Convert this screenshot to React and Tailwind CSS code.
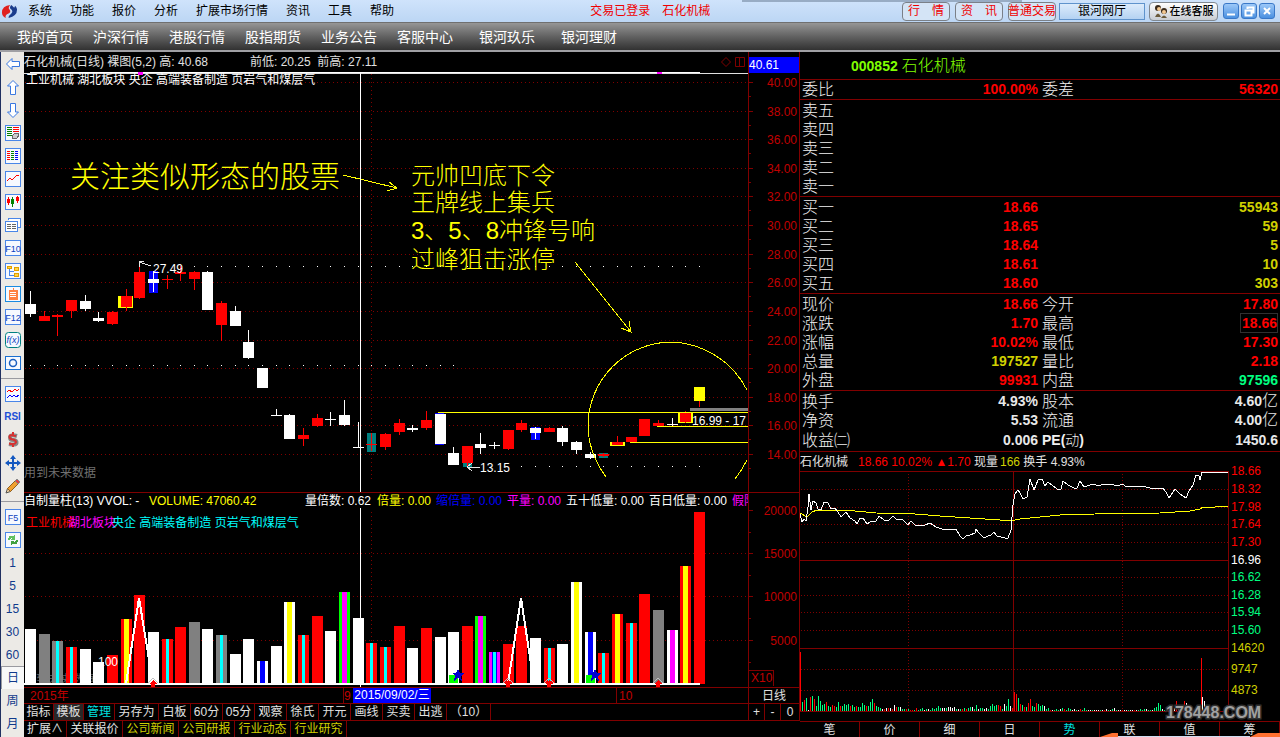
import React, { useState } from 'react';

const RED = '#ff0000';
const WHITE = '#ffffff';
const TEAL = '#008080';
const YELLOW = '#ffff00';
const BLUE = '#0000ff';
const CYAN = '#00ffff';
const GRAY = '#808080';
const GREEN = '#00ff00';
const MAGENTA = '#ff00ff';
const GRID = '#800000';

const menus = ['系统', '功能', '报价', '分析', '扩展市场行情', '资讯', '工具', '帮助'];
const sites = ['我的首页', '沪深行情', '港股行情', '股指期货', '业务公告', '客服中心'];
const partnerSites = ['银河玖乐', '银河理财'];

// [high, open/close top, open/close bottom, low, colour]
const candles = [
  [291, 304, 314, 317, WHITE], [311, 316, 321, 321, RED], [314, 315, 317, 336, RED], [300, 300, 311, 318, RED],
  [295, 301, 309, 311, WHITE], [312, 318, 321, 322, WHITE], [311, 312, 324, 325, RED], [289, 296, 307, 311, RED],
  [264, 272, 298, 299, RED], [271, 279, 283, 292, WHITE], [275, 279, 280, 289, RED], [266, 272, 274, 281, RED],
  [271, 272, 279, 290, RED], [271, 272, 310, 310, WHITE], [301, 303, 325, 341, RED], [306, 311, 326, 326, WHITE],
  [330, 342, 358, 359, WHITE], [368, 368, 388, 388, WHITE], [409, 415, 416, 416, WHITE], [414, 415, 439, 439, WHITE],
  [428, 435, 439, 446, RED], [414, 418, 426, 427, RED], [412, 419, 420, 426, WHITE], [400, 415, 425, 426, WHITE],
  [422, 447, 448, 448, WHITE], [433, 444, 445, 451, RED], [433, 434, 447, 450, RED], [419, 423, 432, 435, RED],
  [425, 428, 430, 432, WHITE], [411, 420, 428, 430, RED], [414, 414, 444, 444, WHITE], [447, 453, 465, 465, WHITE],
  [446, 446, 463, 466, RED], [433, 444, 448, 454, WHITE], [442, 445, 446, 449, WHITE], [430, 430, 449, 450, RED],
  [420, 423, 430, 432, RED], [427, 428, 433, 439, WHITE], [427, 428, 432, 432, RED], [426, 428, 442, 446, WHITE],
  [441, 442, 450, 454, WHITE], [452, 454, 458, 459, WHITE], [453, 454, 456, 457, RED], [436, 442, 445, 445, RED],
  [437, 437, 442, 442, RED], [419, 419, 436, 436, RED], [420, 423, 426, 426, RED], [418, 424, 425, 427, WHITE],
  [411, 413, 422, 423, RED], [387, 387, 401, 401, YELLOW],
];

// [top, colour, stripe colour, stripe width]
const volumes = [
  [629, WHITE], [634, GRAY], [641, GRAY, CYAN, 3], [647, RED, CYAN, 3], [649, WHITE], [662, WHITE], [655, RED],
  [619, RED, YELLOW, 5], [595, RED], [632, WHITE], [639, RED, CYAN, 3], [627, RED], [622, GRAY], [629, WHITE],
  [635, GRAY, CYAN, 3], [654, WHITE], [639, WHITE], [661, WHITE, BLUE, 5], [646, WHITE], [602, WHITE, YELLOW, 5],
  [635, RED, CYAN, 3], [616, RED], [631, WHITE], [592, GREEN, MAGENTA, 5], [618, WHITE], [643, RED, CYAN, 3],
  [647, RED, CYAN, 3], [626, RED], [648, WHITE], [628, RED], [637, WHITE], [632, WHITE], [626, RED],
  [616, GREEN, MAGENTA, 5], [652, MAGENTA, CYAN, 3], [644, RED], [626, RED], [638, WHITE], [648, RED, CYAN, 3],
  [644, WHITE], [582, WHITE, YELLOW, 5], [632, WHITE, BLUE, 5], [653, RED, CYAN, 3], [614, RED, YELLOW, 5],
  [623, RED, CYAN, 3], [594, RED], [610, GRAY], [630, WHITE, MAGENTA, 5], [566, RED, YELLOW, 5], [512, RED],
];

const barX = (i) => 25 + Math.round(i * 13.65);
const priceY = (p) => Math.round(82 + (40 - p) * 14.31);
const prices = [40, 38, 36, 34, 32, 30, 28, 26, 24, 22, 20, 18, 16, 14];
const volumeTicks = [[20000, 511], [15000, 554], [10000, 597], [5000, 641]];

const T = ({ x, y, size = 12, weight = 400, fill = WHITE, anchor = 'start', children }) => (
  <text x={x} y={y} fontSize={size} fontWeight={weight} fill={fill} textAnchor={anchor} dominantBaseline="central">{children}</text>
);

const DotRow = ({ y, from, to }) => (
  <g fill={WHITE}>
    {candles.map((c, i) => (i >= from && i <= to ? <rect key={i} x={barX(i) + 5} y={y} width="1" height="1" /> : null))}
  </g>
);

const PriceChart = () => (
  <svg viewBox="24 72 724 420" className="block h-[420px] w-full" shapeRendering="crispEdges">
    <g stroke={GRID} strokeDasharray="1 3">
      {prices.map((p) => <path key={p} d={`M25 ${priceY(p)}.5H748`} />)}
      <path d="M371.5 74V480" />
    </g>
    <rect x="24" y="73" width="724" height="1" fill="#e0e0e0" />
    <rect x="30" y="72" width="670" height="1" fill={WHITE} />
    <path d="M138 72h5M138 74h5M657 73h5" stroke={MAGENTA} strokeWidth="2" />
    <T x={26} y={80}>工业机械 湖北板块 央企 高端装备制造 页岩气和煤层气</T>

    <DotRow y={266} from={11} to={49} />
    <DotRow y={365} from={0} to={31} />
    <DotRow y={466} from={36} to={49} />

    {/* highlighted sessions */}
    <rect x="118" y="296" width="15" height="12" fill={YELLOW} />
    <rect x="149" y="271" width="9" height="22" fill={BLUE} />
    <rect x="367" y="433" width="9" height="19" fill={TEAL} />
    <rect x="435" y="413" width="9" height="32" fill={BLUE} />
    <rect x="463" y="463" width="9" height="4" fill={TEAL} />
    <rect x="531" y="427" width="9" height="13" fill={BLUE} />
    <rect x="599" y="453" width="9" height="5" fill={TEAL} />
    <rect x="610" y="442" width="15" height="4" fill={YELLOW} />
    <rect x="678" y="412" width="15" height="11" fill={YELLOW} />
    <rect x="699" y="401" width="1" height="6" fill={RED} />

    {candles.map(([high, top, bottom, low, color], i) => (
      <g key={i} fill={color}>
        <rect x={barX(i) + 5} y={high} width="1" height={low - high} />
        <rect x={barX(i)} y={top} width="11" height={Math.max(1, bottom - top)} />
      </g>
    ))}

    <rect x="690" y="408" width="58" height="3" fill={GRAY} />
    <g fill={YELLOW}>
      <rect x="438" y="412" width="310" height="1" />
      <rect x="657" y="426" width="91" height="1" />
      <rect x="630" y="442" width="118" height="1" />
    </g>
    <g fill="none" stroke={YELLOW}>
      <path d="M606 477Q588 452 588 425A84 84 0 0 1 672 342A88 88 0 0 1 747 390M747 460Q742 470 735 479" />
      <path d="M343 175L397 188M389 182L397 188L387 191" />
      <path d="M575 262L631 332M621 328L631 332L629 321" />
    </g>
    <g fill="none" stroke="#e8e8e8">
      <path d="M151 266L139 262M139 267V261H144M480 467H467M472 463L467 467L472 471" />
    </g>
    <T x={153} y={269}>27.49</T>
    <T x={480} y={468}>13.15</T>
    <T x={692} y={421}>16.99 - 17</T>

    <T x={70} y={176} size={30} weight={300} fill={YELLOW}>关注类似形态的股票</T>
    <T x={411} y={175} size={24} weight={300} fill={YELLOW}>元帅凹底下令</T>
    <T x={411} y={202} size={24} weight={300} fill={YELLOW}>王牌线上集兵</T>
    <T x={411} y={230} size={24} weight={300} fill={YELLOW}>3、5、8冲锋号响</T>
    <T x={411} y={259} size={24} weight={300} fill={YELLOW}>过峰狙击涨停</T>
    <T x={24} y={473} fill="#707070">用到未来数据</T>
    <rect x="360" y="72" width="1" height="420" fill={WHITE} />
  </svg>
);

const PriceAxis = () => (
  <svg viewBox="749 52 50 440" className="block h-[440px] w-full" shapeRendering="crispEdges">
    <rect x="749" y="57" width="50" height="16" fill={BLUE} />
    <T x={749} y={65}>40.61</T>
    {prices.map((p) => (
      <g key={p}>
        <rect x="749" y={priceY(p)} width="4" height="1" fill={GRID} />
        <rect x="749" y={priceY(p) + 14} width="2" height="1" fill={GRID} />
        <T x={797} y={priceY(p) + 1} fill="#c00000" anchor="end">{p.toFixed(2)}</T>
      </g>
    ))}
  </svg>
);

const STAR = 'M0-6L2-2H6L3 1L4 6L0 3L-4 6L-3 1L-6-2H-2Z';

const VolumeChart = () => (
  <svg viewBox="24 508 724 179" className="block h-[179px] w-full" shapeRendering="crispEdges">
    <g stroke={GRID} strokeDasharray="1 3">
      {volumeTicks.slice(1).map(([v, y]) => <path key={v} d={`M25 ${y - 1}.5H748`} />)}
      <path d="M371.5 512V684" />
    </g>
    <T x={24} y={680} fill="#606060">用到未来数据</T>
    {volumes.map(([top, color, stripe, w], i) => (
      <g key={i}>
        <rect x={barX(i)} y={top} width="11" height={684 - top} fill={color} />
        {color === MAGENTA && <rect x={barX(i) + 3} y={top} width="5" height={684 - top} fill={BLUE} />}
        {stripe && <rect x={barX(i) + (11 - w) / 2} y={top} width={w} height={684 - top} fill={stripe} />}
      </g>
    ))}
    <rect x="449" y="675" width="9" height="8" fill={GREEN} />
    <rect x="586" y="675" width="9" height="8" fill={GREEN} />
    <path d={STAR} transform="translate(458 675)" fill="#0000d0" />
    <path d={STAR} transform="translate(595 675)" fill="#0000d0" />
    <rect x="24" y="683" width="676" height="2" fill={WHITE} />
    <path d="M126 684L139 598L153 684M508 684L521 598L534 684" fill="none" stroke={WHITE} strokeWidth="2" />
    {[153, 508, 549, 658].map((x) => (
      <g key={x}>
        <path d={`M${x - 5} 683L${x} 678L${x + 5} 683`} fill="none" stroke="#c0c0c0" />
        <path d={`M${x} 680L${x + 4} 684H${x + 2}V687H${x - 2}V684H${x - 4}Z`} fill={RED} />
      </g>
    ))}
    <T x={98} y={662}>100</T>
    <T x={26} y={523} fill={RED}>工业机械</T>
    <T x={68} y={523} fill={MAGENTA}>湖北板块</T>
    <T x={112} y={523} fill={CYAN}>央企 高端装备制造 页岩气和煤层气</T>
    <rect x="360" y="508" width="1" height="179" fill={WHITE} />
  </svg>
);

const VolumeAxis = () => (
  <svg viewBox="749 493 50 194" className="block h-[194px] w-full" shapeRendering="crispEdges">
    {volumeTicks.map(([v, y]) => (
      <g key={v}>
        <rect x="749" y={y - 1} width="4" height="1" fill={GRID} />
        <rect x="749" y={y + 21} width="2" height="1" fill={GRID} />
        <T x={797} y={y} fill="#c00000" anchor="end">{v}</T>
      </g>
    ))}
    <path d="M749 670.5H773.5V685.5" fill="none" stroke={GRID} />
    <T x={751} y={678} fill="#c00000">X10</T>
  </svg>
);

/* ---------- left tool strip ---------- */

const Box = ({ stroke = '#4a86e8', children }) => (
  <svg viewBox="0 0 16 16" className="size-4" shapeRendering="crispEdges">
    <rect x="0.5" y="0.5" width="15" height="15" fill="#f6f9ff" stroke={stroke} />
    {children}
  </svg>
);

const Rows = ({ x, color, ys, w = 3 }) => ys.map((y) => <rect key={y} x={x} y={y} width={w} height="1" fill={color} />);

const BoxText = ({ children }) => (
  <Box>
    <text x="8" y="12" fontSize="9" fill="#0a3fc0" textAnchor="middle">{children}</text>
  </Box>
);

const Arrow = ({ d }) => (
  <svg viewBox="0 0 16 16" className="size-4"><path d={d} fill="#fff" stroke="#3a78e0" /></svg>
);

const tools = [
  ['后退', <Arrow d="M1.5 8L7 2.5V5.5H14.5V10.5H7V13.5Z" />],
  ['上翻', <Arrow d="M8 1.5L13.5 7H10.5V15.5H5.5V7H2.5Z" />],
  ['下翻', <Arrow d="M8 15.5L2.5 10H5.5V1.5H10.5V10H13.5Z" />],
  ['报价', (
    <Box>
      <Rows x={2} w={5} color="#008000" ys={[2, 4, 6, 8, 10]} />
      <Rows x={8} w={6} color={RED} ys={[2, 4, 6]} />
      <path d="M7 11l2-2 4-1 1 2-2 3-4 1z" fill="#ccc" stroke="#666" />
    </Box>
  )],
  ['列表', (
    <Box>
      <Rows x={2} color={RED} ys={[3, 5, 7, 9, 11]} />
      <Rows x={6} color="#008000" ys={[3, 5, 7, 9, 11]} />
      <Rows x={10} color={BLUE} ys={[3, 5, 7, 9, 11]} />
    </Box>
  )],
  ['分时', <Box><path d="M2 10L5 7L7 9L11 5L14 4" stroke={RED} fill="none" /></Box>],
  ['K线', (
    <Box>
      <path d="M3.5 3V11M12.5 2V9" stroke={RED} />
      <path d="M7.5 3V13" stroke="#008000" />
      <rect x="2" y="5" width="3" height="4" fill={RED} />
      <rect x="6" y="5" width="3" height="5" fill="#008000" />
      <rect x="11" y="3" width="3" height="4" fill={RED} />
    </Box>
  )],
  ['窗口', (
    <svg viewBox="0 0 16 16" className="size-4" shapeRendering="crispEdges">
      <path d="M3.5 3V1.5H15.5V10.5H13" fill="#fff" stroke="#4a86e8" />
      <rect x="0.5" y="4.5" width="12" height="10" fill="#fff" stroke="#4a86e8" />
      <path d="M2 7.5H6M7 7.5H11M2 9.5H6M7 9.5H11M2 11.5H6M7 11.5H11" stroke="#666" />
    </svg>
  )],
  ['F10', <BoxText>F10</BoxText>],
  ['板块', (
    <Box>
      <path d="M4.5 6V12.5H9M4.5 8.5H9" stroke="#4a86e8" fill="none" />
      <path d="M2.500 3.500H6.500V5.500H2.500ZM9.500 4.500H13.500V7.500H9.500ZM9.500 10.500H13.500V13.500H9.500Z" fill="#ffd54a" stroke="#e0a000" />
    </Box>
  )],
  ['自选', (
    <Box stroke="#1a8ae0">
      <path d="M8 2V4M4 4H12V13H4Z" fill="#ff8040" stroke="#ff8040" />
      <path d="M5 6.500H11M5 8.500H11M5 10.500H11" stroke="#fff" />
    </Box>
  )],
  ['F12', <BoxText>F12</BoxText>],
  ['公式', (
    <svg viewBox="0 0 16 16" className="size-4">
      <rect x="0.5" y="0.5" width="15" height="15" rx="3" fill="#f6f9ff" stroke="#008080" />
      <text x="8" y="11" fontSize="9" fontStyle="italic" fill="#0a3fc0" textAnchor="middle">f(x)</text>
    </svg>
  )],
  ['圆', <svg viewBox="0 0 16 16" className="size-4"><rect x="0.5" y="1.5" width="15" height="13" fill="#f6f9ff" stroke="#1a6fd0" /><circle cx="8" cy="8" r="3.500" fill="none" stroke="#1a5fc0" strokeWidth="1.500" /></svg>],
];

const drawTools = [
  ['叠加', (
    <Box>
      <path d="M2 6L4 4L7 6L10 3L12 5L14 3" stroke={RED} fill="none" />
      <path d="M2 12L5 9L7 11L9 9L11 11L14 9" stroke={BLUE} fill="none" />
    </Box>
  )],
  ['RSI', <span className="text-[10px] font-bold text-[#2050d8]">RSI</span>],
  ['交易', (
    <svg viewBox="0 0 16 16" className="size-4">
      <path d="M12 4Q5 2 5 5.500Q5 8 8 8Q12 8 11.500 11Q11 13.500 4 12" fill="none" stroke="#888" strokeWidth="4" />
      <path d="M11 4Q4 2 4.500 5Q5 7.500 8 7.500Q11 8 11 10.500Q10 13 4 11.500M8 0V3M8 12V15" fill="none" stroke="#d83030" strokeWidth="2" />
    </svg>
  )],
  ['移动', (
    <svg viewBox="0 0 16 16" className="size-4">
      <path d="M8 0L11 4H9V7H12V5L16 8L12 11V9H9V12H11L8 16L5 12H7V9H4V11L0 8L4 5V7H7V4H5Z" fill="#1458c0" />
    </svg>
  )],
  ['画笔', (
    <svg viewBox="0 0 16 16" className="size-4">
      <path d="M1 15L2.500 10.500L5.500 13.500Z" fill="#f0d0a0" stroke="#555" />
      <path d="M2.500 10.500L10 3L13 6L5.500 13.500Z" fill="#f0a030" stroke="#906020" />
      <path d="M10 3L12 1L15 4L13 6Z" fill="#e04040" stroke="#888" />
    </svg>
  )],
];

const periodTools = [
  ['F5', <BoxText>F5</BoxText>],
  ['刷新', (
    <Box>
      <path d="M3 8Q3 3 8 4L10 3V8H6L7 6Q5 6 5 8Z" fill="#60c060" />
      <path d="M13 8Q13 13 8 12L6 13V8.500H10L9 10Q11 10 11 8Z" fill="#40a040" />
    </Box>
  )],
  ...['1', '5', '15', '30', '60'].map((n) => [n, <span className="text-[#103a8c]">{n}</span>]),
];

const ToolGroup = ({ items }) => items.map(([label, icon]) => (
  <button key={label} aria-label={label} className="flex h-[23px] w-full items-center justify-center">{icon}</button>
));

const Divider = () => <div className="flex h-2 w-full items-center"><div className="h-px w-full bg-[#9a9aa0]" /></div>;

const ToolStrip = () => {
  const [period, setPeriod] = useState('日');
  return (
    <aside className="flex w-6 shrink-0 flex-col border-l border-[#203060] bg-[#eceae6]">
      <ToolGroup items={tools} />
      <Divider />
      <ToolGroup items={drawTools} />
      <Divider />
      <ToolGroup items={periodTools} />
      {['日', '周', '月'].map((p) => (
        <button
          key={p}
          onClick={() => setPeriod(p)}
          className={`h-[23px] w-full text-[#103a8c] ${p === period ? 'border-t border-l border-[#9a9aa0] bg-[#f8f8f8]' : ''}`}
        >
          {p}
        </button>
      ))}
    </aside>
  );
};

/* ---------- window chrome ---------- */

const PillButton = ({ className, children }) => (
  <button className={`h-[19px] shrink-0 rounded-[4px] border border-[#7a8088] bg-[#d4e4f6] text-[#f00000] ${className}`}>{children}</button>
);

const windowIcons = [
  ['最小化', 'M4 11.500H12'],
  ['还原', 'M6.500 6V4.500H12.500V9.500H11M4.500 7.500H10.500V12.500H4.500Z'],
  ['关闭', 'M5 5L11 11M11 5L5 11'],
];

const TopBar = () => (
  <header className="relative flex h-[22px] items-center bg-linear-to-b from-[#cfe3fb] to-[#bcd6f4] text-black">
    <div className="absolute top-0 left-[58%] h-0.5 w-[280px] bg-[#98acc4]" />
    <svg viewBox="0 0 18 18" className="mr-2.5 ml-px size-[17px]">
      <path d="M10 2Q1 3 1 10Q1 14 5 16Q4 12 8 11Q11 10 9 7Q7 5 10 2Z" fill="#e02020" />
      <path d="M11 2Q8 5 11 7Q13 9 11 11Q8 13 8 16Q17 14 17 7Q17 5 15 3L14 5Z" fill="#1a3c8c" />
    </svg>
    <nav className="flex gap-[18px]">
      {menus.map((m) => <button key={m}>{m}</button>)}
    </nav>
    <div className="ml-[196px] flex gap-3 whitespace-nowrap text-[#f00000]">
      <span>交易已登录</span>
      <span>石化机械</span>
    </div>
    <div className="ml-auto flex items-center gap-[5px] pr-[5px] whitespace-nowrap">
      <PillButton className="w-12">行&emsp;情</PillButton>
      <PillButton className="w-12">资&emsp;讯</PillButton>
      <PillButton className="w-12 px-0">
        <span className="-mx-px">普通交易</span>
      </PillButton>
      <button className="-ml-0.5 h-[17px] w-[86px] border border-[#5f93cc] bg-linear-to-b from-[#dcebfb] to-[#b4d2f2] leading-none">银河网厅</button>
      <button className="-ml-px flex h-[19px] w-[69px] items-center justify-center gap-0.5 rounded-[4px] border border-[#808890] bg-linear-to-b from-white to-[#c8ccd2] text-[11px] font-medium">
        <svg viewBox="0 0 14 14" className="size-[14px]">
          <circle cx="4" cy="4" r="3" fill="#3a2a1a" />
          <circle cx="10" cy="7" r="3" fill="#3a2a1a" />
          <circle cx="5" cy="5" r="2" fill="#f4c890" />
          <circle cx="10" cy="8" r="2" fill="#f4c890" />
          <path d="M1 13Q4 6 7 13ZM7 14Q10 9 13 14Z" fill="#6a5a3a" />
        </svg>
        在线客服
      </button>
      <div className="flex gap-0.5">
        {windowIcons.map(([label, d]) => (
          <button key={label} aria-label={label} className="size-4 rounded-[3px] border border-[#3a78c8] bg-linear-to-b from-[#9cc8f8] to-[#4a90e0]">
            <svg viewBox="0 0 16 16" className="-m-px size-4"><path d={d} fill="none" stroke="#fff" strokeWidth="2" /></svg>
          </button>
        ))}
      </div>
    </div>
  </header>
);

const SiteBar = () => (
  <nav className="flex h-[30px] items-center gap-5 border-t border-b-2 border-t-[#707070] border-b-[#a0a0a4] bg-linear-to-b from-[#969696] to-[#323232] pl-[17px] text-sm text-white">
    {sites.map((s) => <a key={s} href="#">{s}</a>)}
    {partnerSites.map((s) => <a key={s} href="#" className="ml-1.5">{s}</a>)}
  </nav>
);

/* ---------- chart pane ---------- */

const Cell = ({ className = '', children }) => (
  <button className={`h-full shrink-0 border-r border-[#800000] whitespace-nowrap ${className}`}>{children}</button>
);

const templates = ['白板', '60分', '05分', '观察', '徐氏', '开元', '画线', '买卖', '出逃'];
const infoLinks = ['公司新闻', '公司研报', '行业动态', '行业研究'];

const ChartPane = () => (
  <section className="flex min-w-0 flex-1 flex-col leading-4">
    <div className="flex">
      <div className="min-w-0 flex-1">
        <div className="flex h-5 items-center whitespace-pre text-[#e0e0e0]">
          <span className="w-[226px]">石化机械(日线) 裸图(5,2) 高: 40.68</span>
          <span>前低: 20.25  前高: 27.11</span>
          <svg viewBox="0 0 26 12" className="mr-0.5 ml-auto h-3 w-[26px]">
            <path d="M6 1.500L10.500 6L6 10.500L1.500 6ZM15.500 1.500H24.500V10.500H15.500ZM19.500 1.500V10.500" fill="none" stroke={GRID} />
          </svg>
        </div>
        <PriceChart />
        <div className="flex h-4 items-center overflow-hidden border-t border-[#800000] whitespace-nowrap text-white">
          <span className="w-[125px] shrink-0">自制量柱(13) VVOL: -</span>
          <span className="w-[156px] shrink-0 text-[#ffff00]">VOLUME: 47060.42</span>
          <span className="w-[72px] shrink-0">量倍数: 0.62</span>
          <span className="w-[59px] shrink-0 text-[#ffff00]">倍量: 0.00</span>
          <span className="w-[71px] shrink-0 text-[#0000ff]">缩倍量: 0.00</span>
          <span className="w-[59px] shrink-0 text-[#ff00ff]">平量: 0.00</span>
          <span className="w-[83px] shrink-0">五十低量: 0.00</span>
          <span className="w-[83px] shrink-0">百日低量: 0.00</span>
          <span className="shrink-0 text-[#ff00ff]">假阳</span>
        </div>
        <VolumeChart />
      </div>
      <div className="w-[52px] shrink-0 border-x border-[#800000]">
        <PriceAxis />
        <div className="border-t border-[#800000]"><VolumeAxis /></div>
      </div>
    </div>
    <div className="flex h-4 items-center border-t border-[#800000] text-[#c00000]">
      <span className="w-[319px] shrink-0 pl-1.5">2015年</span>
      <span className="h-full w-2.5 shrink-0 border-l border-[#800000]">9</span>
      <span className="h-full w-[78px] shrink-0 bg-[#0000ff] text-center leading-[15px] whitespace-nowrap text-white">2015/09/02/三</span>
      <span className="h-full w-[185px] shrink-0" />
      <span className="h-full flex-1 border-l border-[#800000] pl-0.5">10</span>
      <span className="h-full w-[52px] border-x border-[#800000] text-center text-[#e0e0e0]">日线</span>
    </div>
    <div className="flex h-[17px] items-center border-t border-[#800000] text-[#e0e0e0]">
      <Cell className="w-[30px]">指标</Cell>
      <Cell className="w-[30px] bg-[#282828]">模板</Cell>
      <Cell className="w-[31px] text-[#00e0e0]">管理</Cell>
      <Cell className="w-11">另存为</Cell>
      {templates.map((t) => <Cell key={t} className="w-8">{t}</Cell>)}
      <Cell className="w-11">（10）</Cell>
      <span className="flex-1" />
      <Cell className="w-[17px] border-l">+</Cell>
      <Cell className="w-4">-</Cell>
      <Cell className="w-[19px]">0</Cell>
    </div>
    <div className="flex h-[17px] items-center border-t border-[#800000] text-[#e0e0e0]">
      <Cell className="w-[43px]">扩展∧</Cell>
      <Cell className="w-14">关联报价</Cell>
      {infoLinks.map((t) => <Cell key={t} className="w-14 text-[#d0d000]">{t}</Cell>)}
    </div>
  </section>
);

/* ---------- quote pane ---------- */

const up = 'text-[#ff0000]';
const amount = 'text-[#d0d000]';
const flat = 'text-[#e8e8e8]';
const down = 'text-[#00ff80]';

const QuoteTable = ({ rows, className = '' }) => (
  <table className={`w-full table-fixed border-t border-separate border-spacing-0 border-[#800000] text-base ${className}`}>
    <tbody>
      {rows.map(([a, av, ac, b, bv, bc], i) => (
        <tr key={i} className="h-[19px] leading-[19px] text-[#f0f0f0]">
          <th scope="row" className="w-1/5 p-0 pl-0.5 text-left font-light whitespace-nowrap">{a}</th>
          <td className={`w-[30%] p-0 pr-0.5 text-right text-sm leading-[19px] font-bold ${ac}`}>{av}</td>
          <th scope="row" className="w-1/5 p-0 pl-0.5 text-left font-light whitespace-nowrap">{b}</th>
          <td className={`w-[30%] p-0 pr-0.5 text-right text-sm leading-[19px] font-bold whitespace-nowrap ${bc}`}>{bv}</td>
        </tr>
      ))}
    </tbody>
  </table>
);

const Yi = ({ children }) => <>{children}<span className="text-base leading-none font-light">亿</span></>;

const asks = ['卖五', '卖四', '卖三', '卖二', '卖一'].map((n) => [n, '', '', '', '', '']);
const bids = [
  ['买一', '18.66', up, '', '55943', amount],
  ['买二', '18.65', up, '', '59', amount],
  ['买三', '18.64', up, '', '5', amount],
  ['买四', '18.61', up, '', '10', amount],
  ['买五', '18.60', up, '', '303', amount],
];
const summary = [
  ['现价', '18.66', up, '今开', '17.80', up],
  ['涨跌', '1.70', up, '最高', <span className="border border-[#303030] py-px pl-px">18.66</span>, up],
  ['涨幅', '10.02%', up, '最低', '17.30', up],
  ['总量', '197527', amount, '量比', '2.18', up],
  ['外盘', '99931', up, '内盘', '97596', down],
];
const fundamentals = [
  ['换手', '4.93%', flat, '股本', <Yi>4.60</Yi>, flat],
  ['净资', '5.53', flat, '流通', <Yi>4.00</Yi>, flat],
  ['收益㈡', '0.006', flat, <span className="text-sm"><b className="font-bold">PE(</b>动<b className="font-bold">)</b></span>, '1450.6', flat],
];

const dayTicks = [
  ['18.66', 471, RED], ['18.32', 489, RED], ['17.98', 507, RED], ['17.64', 524, RED], ['17.30', 542, RED],
  ['16.96', 560, WHITE], ['16.62', 577, '#00ff80'], ['16.28', 595, '#00ff80'], ['15.94', 612, '#00ff80'],
  ['15.60', 630, '#00ff80'], ['14620', 648, '#d0d000'], ['9747', 669, '#d0d000'], ['4873', 690, '#d0d000'],
];

const dayPrice = '800,514 802,522 804,519 806,521 808,507 809,494 811,510 813,501 816,503 818,509 821,510 824,502 828,503 831,509 835,508 838,512 841,517 846,512 850,518 855,521 857,524 860,518 863,518 867,524 872,521 876,521 879,516 884,520 889,520 893,516 896,519 903,520 908,525 911,521 915,525 925,525 930,523 936,527 942,529 956,529 960,536 963,539 966,536 970,535 975,533 976,529 979,533 984,538 988,536 991,535 994,532 997,536 1005,538 1008,538 1011,530 1013,505 1015,494 1018,490 1020,493 1023,499 1027,497 1030,479 1034,490 1038,480 1042,479 1045,486 1048,482 1052,485 1057,489 1061,489 1063,481 1068,485 1074,488 1077,488 1080,481 1084,487 1090,485 1094,484 1098,486 1104,484 1110,484 1118,486 1122,484 1127,487 1140,486 1146,487 1150,488 1163,488 1166,492 1169,498 1175,489 1180,494 1186,498 1189,491 1193,485 1196,475 1199,476 1200,480 1202,472 1228,472';
const dayAverage = '800,513 807,517 812,512 817,510 840,510 855,511 876,513 915,514 940,516 970,518 1000,520 1010,521 1020,519 1040,517 1060,515 1095,514 1160,513 1190,511 1200,509 1203,507 1215,507 1228,506';

// minute volume, two pixels a minute: g / r / w + height
const dayVolume = (
  'g9 r11 g13 w1 r14 g15 r12 g5 g15 g10 g6 g7 r9 g5 g4 r6 r5 g4 g9 r5 g5 g7 g6 g7 r5 g6 g4 r5 g4 g4 g8 g6 r5 g5 g9 g12 r8 '
  + 'g5 g4 g3 w2 r2 w3 r3 w3 r2 w6 r4 g4 w4 g2 g2 r2 g2 r1 r1 g1 r3 g1 g2 g3 w1 g2 w2 g1 g3 g2 g3 g5 g3 w3 w3 g3 w4 w4 w3 w4 g2 w2 '
  + 'g2 r2 g3 r2 g3 g4 w4 g2 g6 w2 g3 g3 w2 w3 g2 g5 g7 g5 g6 r6 r5 g2 w7 g5 g12 w5 r3 '
  + 'r19 r17 g13 r7 g6 r4 g4 r8 r12 g5 g4 r8 g7 g5 g6 w5 g2 g3 r1 w1 g1 g2 g1 w2 g3 r2 g1 g3 g2 w1 w2 g1 w1 r2 g1 g3 g1 '
  + 'w1 w1 g1 w1 w1 w1 g1 w1 r1 w2 g1 w1 g2 w3 g1 w1 w1 r1 w1 w1 g1 w1 w1 r1 w1 g1 g2 g1 g2 w2 g1 g1 w1 g3 g4 g8 g6 w2 g1 '
  + 'r2 w1 r3 g2 w3 r10 w4 r5 g6 r10 w8 r4'
).split(' ');
const dayColors = { g: '#00ff80', r: RED, w: WHITE };

const DayChart = () => (
  <svg viewBox="800 471 480 250" className="block h-[250px] w-full overflow-visible" shapeRendering="crispEdges">
    <g stroke={GRID} strokeDasharray="1 2">
      {dayTicks.map(([label, y]) => <path key={label} d={`M801 ${y}.5H1228`} />)}
      <path d="M908.5 471V711M1122.5 471V711" />
    </g>
    <path d="M800 471.5H1228.5V711.5H800M800 560.5H1228M800 648.5H1228M1013.5 471V711" fill="none" stroke={GRID} />
    <rect x="800" y="652" width="1" height="59" fill={RED} />
    {dayVolume.map((v, i) => {
      const h = Number(v.slice(1));
      return <rect key={i} x={802 + i * 2} y={711 - h} width="1" height={h} fill={dayColors[v[0]]} />;
    })}
    <rect x="1201" y="658" width="1" height="53" fill={RED} />
    <rect x="1202" y="697" width="1" height="14" fill={WHITE} />
    <rect x="1204" y="701" width="1" height="10" fill={WHITE} />
    <rect x="1216" y="706" width="1" height="5" fill={WHITE} />
    <polyline points={dayAverage} fill="none" stroke={YELLOW} />
    <polyline points={dayPrice} fill="none" stroke={WHITE} />
    {dayTicks.map(([label, y, fill]) => <T key={label} x={1231} y={y} fill={fill}>{label}</T>)}
    <text x="1166" y="718" fontSize="16" fontWeight="bold" fill="#a0a0a0" stroke="#303030" strokeWidth="3" paintOrder="stroke">178448.COM</text>
  </svg>
);

const QuotePane = () => {
  const [tab, setTab] = useState('势');
  return (
    <section className="w-[480px] shrink-0 leading-4">
      <h1 className="flex h-[27px] items-center gap-1 pl-[51px] text-base font-light text-[#80ff00]">
        <b className="text-sm font-bold">000852</b>石化机械
      </h1>
      <QuoteTable rows={[['委比', '100.00%', up, '委差', '56320', up]]} />
      <QuoteTable rows={asks} className="pt-px" />
      <QuoteTable rows={bids} className="pt-px" />
      <QuoteTable rows={summary} className="pt-px" />
      <QuoteTable rows={fundamentals} className="py-px" />
      <div className="flex h-5 items-center border-t border-[#800000] whitespace-pre text-[#e0e0e0]">
        <span className="w-[58px]">石化机械</span>
        <span className="text-[#ff0000]">18.66 10.02% ▲1.70 </span>
        现量<span className="pl-0.5 text-[#d0d000]">166 </span>换手 4.93%
      </div>
      <DayChart />
      <div className="relative grid h-4 grid-cols-8 border-t border-[#800000]">
        {['笔', '价', '细', '日', '势', '联', '值', '筹'].map((t) => (
          <button
            key={t}
            onClick={() => setTab(t)}
            className={`h-[15px] border-r border-[#800000] ${t === tab ? 'text-[#00e0e0]' : 'text-[#e0e0e0]'}`}
          >
            {t}
          </button>
        ))}
        <svg viewBox="0 0 180 4" className="absolute right-0 bottom-0 h-1 w-[180px]">
          <path d="M0 4L12 0H18V4ZM150 4L158 0H180V4Z" fill="#ff7030" />
          <path d="M18 3.500H150" stroke="#d0dcf0" />
        </svg>
      </div>
    </section>
  );
};

const App = () => (
  <div className="min-h-screen overflow-hidden bg-black font-['Liberation_Sans','Noto_Sans_CJK_SC',sans-serif] text-xs">
    <TopBar />
    <SiteBar />
    <main className="flex">
      <ToolStrip />
      <ChartPane />
      <QuotePane />
    </main>
  </div>
);

export default App;
